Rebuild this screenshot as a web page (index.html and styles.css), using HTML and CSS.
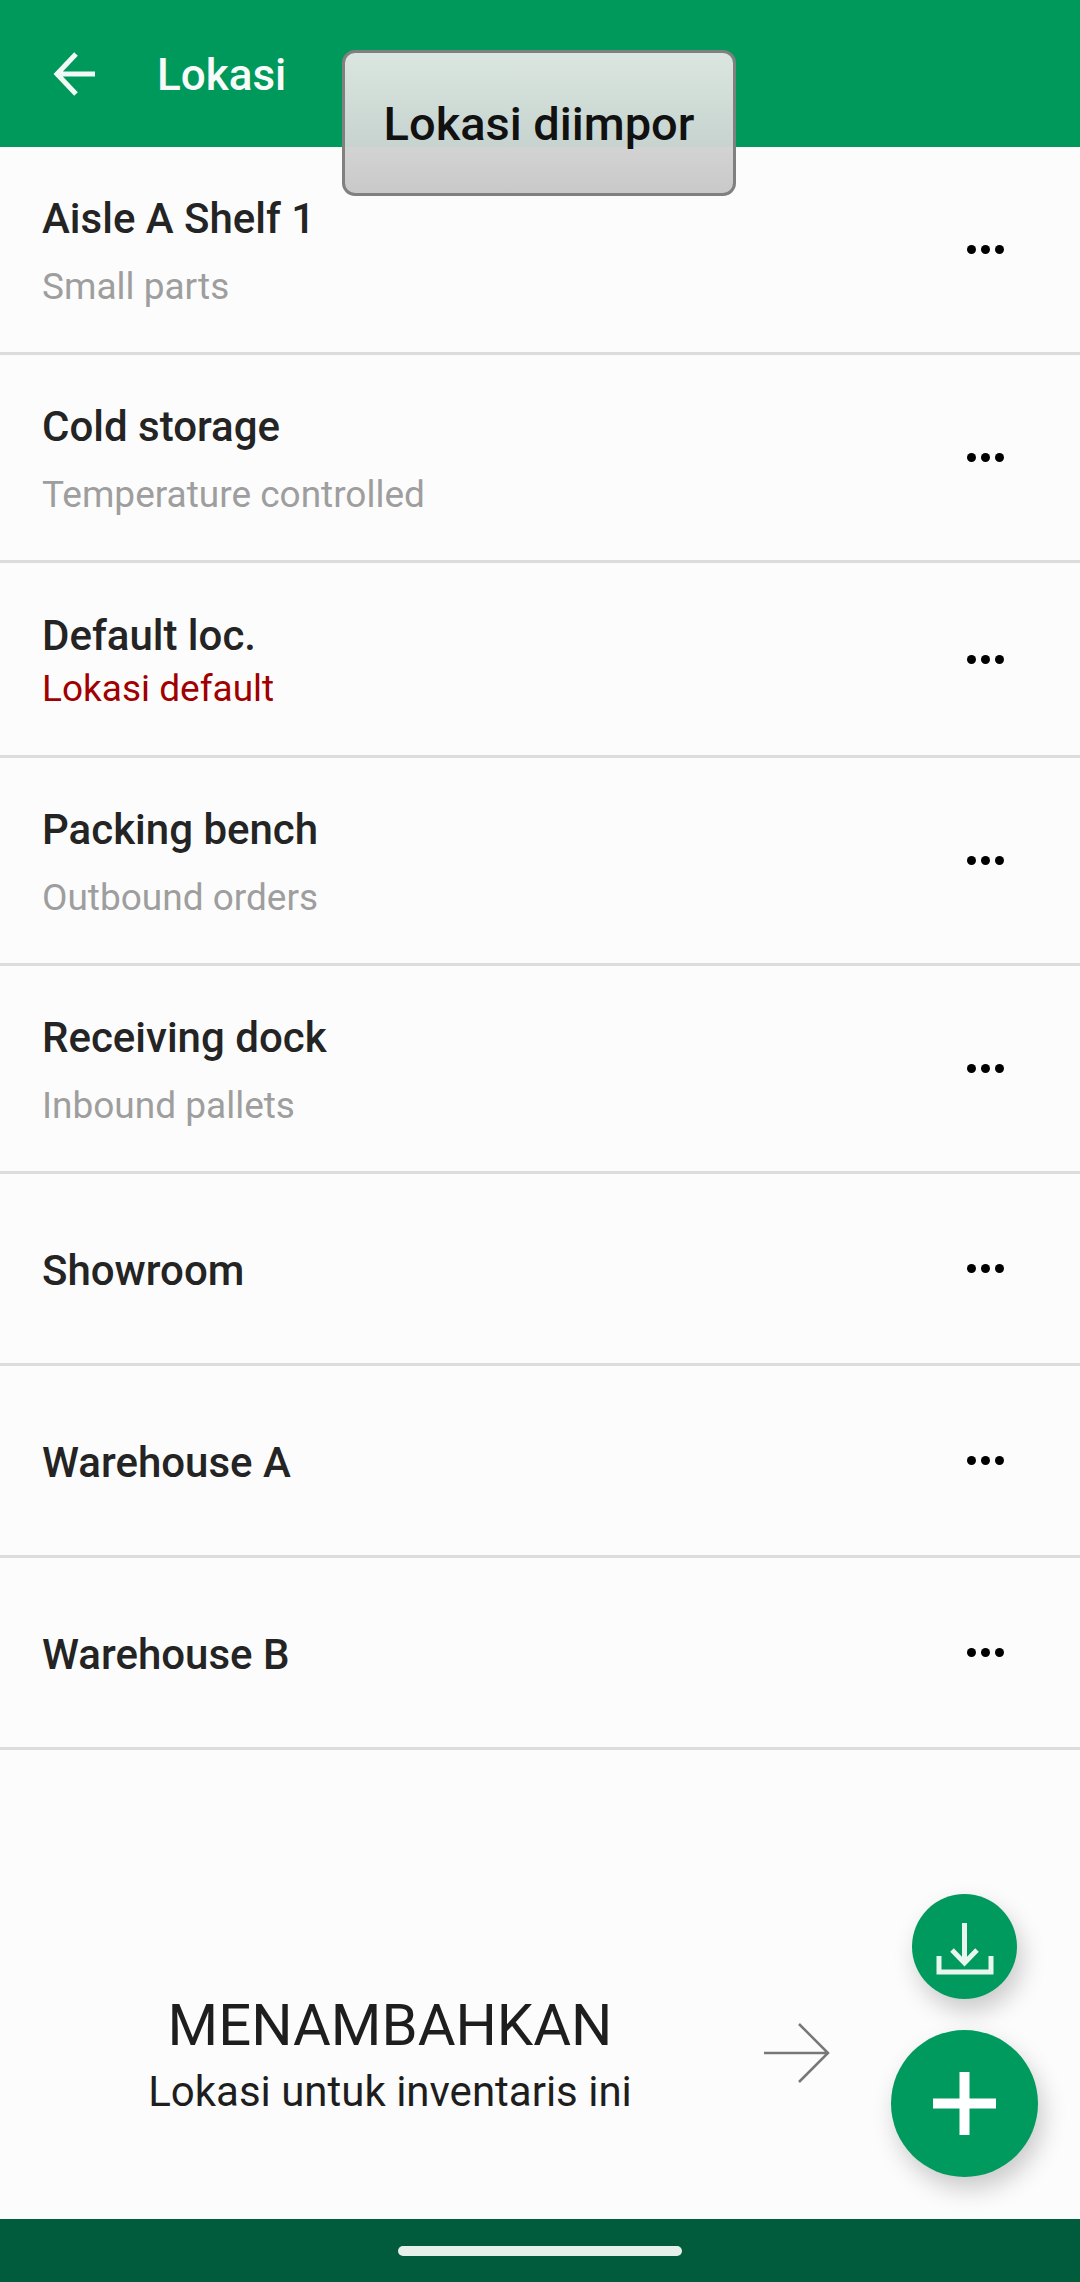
FILE: index.html
```html
<!DOCTYPE html>
<html lang="id">
<head>
    <meta charset="UTF-8">
    <meta name="viewport" content="width=device-width, initial-scale=1.0">
    <title>Lokasi</title>
    <link rel="stylesheet" href="styles.css">
</head>
<body>
    <div class="app">
        <header class="top-bar">
            <svg class="back-icon" viewBox="0 0 48 48">
                <path d="M45 24H8M26 4L7 24l19 20"></path>
            </svg>
            <h1 class="top-title">Lokasi</h1>
        </header>

        <div class="toast">Lokasi diimpor</div>

        <ul class="list">
            <li class="row row-sub">
                <div class="row-text">
                    <span class="row-title">Aisle A Shelf 1</span>
                    <span class="row-note">Small parts</span>
                </div>
                <div class="dots"><i></i><i></i><i></i></div>
            </li>
            <li class="row row-sub">
                <div class="row-text">
                    <span class="row-title">Cold storage</span>
                    <span class="row-note">Temperature controlled</span>
                </div>
                <div class="dots"><i></i><i></i><i></i></div>
            </li>
            <li class="row row-default">
                <div class="row-text">
                    <span class="row-title">Default loc.</span>
                    <span class="row-note note-default">Lokasi default</span>
                </div>
                <div class="dots"><i></i><i></i><i></i></div>
            </li>
            <li class="row row-sub">
                <div class="row-text">
                    <span class="row-title">Packing bench</span>
                    <span class="row-note">Outbound orders</span>
                </div>
                <div class="dots"><i></i><i></i><i></i></div>
            </li>
            <li class="row row-sub">
                <div class="row-text">
                    <span class="row-title">Receiving dock</span>
                    <span class="row-note">Inbound pallets</span>
                </div>
                <div class="dots"><i></i><i></i><i></i></div>
            </li>
            <li class="row">
                <div class="row-text">
                    <span class="row-title">Showroom</span>
                </div>
                <div class="dots"><i></i><i></i><i></i></div>
            </li>
            <li class="row">
                <div class="row-text">
                    <span class="row-title">Warehouse A</span>
                </div>
                <div class="dots"><i></i><i></i><i></i></div>
            </li>
            <li class="row">
                <div class="row-text">
                    <span class="row-title">Warehouse B</span>
                </div>
                <div class="dots"><i></i><i></i><i></i></div>
            </li>
        </ul>

        <section class="hint">
            <div class="hint-text">
                <div class="hint-title">MENAMBAHKAN</div>
                <div class="hint-sub">Lokasi untuk inventaris ini</div>
            </div>
            <svg class="hint-arrow" viewBox="0 0 66 60">
                <path d="M0 30H64M35 1l29 29-29 29"></path>
            </svg>
        </section>

        <button class="fab fab-small" type="button">
            <svg viewBox="0 0 105 105">
                <path d="M52.500 29V68M40 56l12.500 13L65 56M27 62V78H79V62"></path>
            </svg>
        </button>
        <button class="fab fab-large" type="button">
            <svg viewBox="0 0 147 147">
                <path d="M73.500 42V105M42 73.500H105"></path>
            </svg>
        </button>

        <footer class="nav-bar">
            <div class="nav-handle"></div>
        </footer>
    </div>
</body>
</html>
```

FILE: styles.css
```css
* {
    box-sizing: border-box;
}
body {
    margin: 0;
    font-family: Roboto, "Noto Sans", sans-serif;
    background-color: #fcfcfc;
}
.app {
    position: relative;
    display: flex;
    flex-direction: column;
    width: 1080px;
    height: 2282px;
    overflow: hidden;
}
.top-bar {
    display: flex;
    align-items: center;
    flex: none;
    height: 147px;
    padding-left: 50px;
    background-color: #00995c;
}
.back-icon {
    width: 48px;
    height: 48px;
    fill: none;
    stroke: #f2faf6;
    stroke-width: 5;
}
.top-title {
    margin: 2px 0 0 59px;
    font-size: 44px;
    font-weight: 500;
    color: #f7fcfa;
}
.toast {
    position: absolute;
    top: 50px;
    left: 342px;
    width: 394px;
    height: 146px;
    padding-top: 43px;
    text-align: center;
    font-size: 47px;
    font-weight: 500;
    color: #111;
    border: 3px solid #808080;
    border-radius: 13px;
    background: linear-gradient(#dbe6e0, #c6d3ce 94px, #d3d3d3 94px, #c9c9c9);
}

/* list */
.list {
    flex: none;
    margin: 0;
    padding: 0;
    list-style: none;
}
.row {
    display: flex;
    align-items: center;
    justify-content: space-between;
    height: 192px;
    padding: 0 42px;
    border-bottom: 3px solid #dcdcdc;
}
.row-sub {
    height: 208px;
}
.row-default {
    height: 195px;
}
.row-text {
    display: flex;
    flex-direction: column;
    padding-top: 4px;
}
.row-title {
    font-size: 42px;
    font-weight: 500;
    line-height: 50px;
    color: #242424;
}
.row-note {
    margin-top: 20px;
    font-size: 37px;
    line-height: 46px;
    color: #9e9e9e;
}
.note-default {
    margin-top: 5px;
    color: #a00000;
}
.dots {
    display: flex;
    gap: 5px;
    margin-right: 34px;
}
.dots i {
    width: 9px;
    height: 9px;
    border-radius: 50%;
    background-color: #000;
}

/* empty area under the list */
.hint {
    display: flex;
    align-items: center;
    flex: 1;
    padding: 130px 0 0 0;
}
.hint-text {
    width: 490px;
    margin-left: 145px;
    padding-top: 9px;
    text-align: center;
    color: #1e1e1e;
}
.hint-title {
    font-size: 58px;
    line-height: 68px;
}
.hint-sub {
    margin-top: 8px;
    font-size: 42px;
    line-height: 50px;
}
.hint-arrow {
    width: 66px;
    height: 60px;
    margin-top: 6px;
    margin-left: 129px;
    fill: none;
    stroke: #777;
    stroke-width: 2.500;
}

.fab {
    position: absolute;
    padding: 0;
    border: none;
    border-radius: 50%;
    background-color: #009a5e;
    box-shadow: 5px 12px 24px rgba(0, 0, 0, 0.2);
}
.fab svg {
    display: block;
    width: 100%;
    height: 100%;
    fill: none;
}
.fab-small {
    top: 1894px;
    left: 912px;
    width: 105px;
    height: 105px;
}
.fab-small svg {
    stroke: #e8f6ef;
    stroke-width: 5;
}
.fab-large {
    top: 2030px;
    left: 891px;
    width: 147px;
    height: 147px;
}
.fab-large svg {
    stroke: #fff;
    stroke-width: 10;
}
.nav-bar {
    display: flex;
    justify-content: center;
    flex: none;
    height: 63px;
    padding-top: 27px;
    background-color: #005c3c;
}
.nav-handle {
    width: 284px;
    height: 10px;
    border-radius: 5px;
    background-color: #e6f0ea;
}
```
